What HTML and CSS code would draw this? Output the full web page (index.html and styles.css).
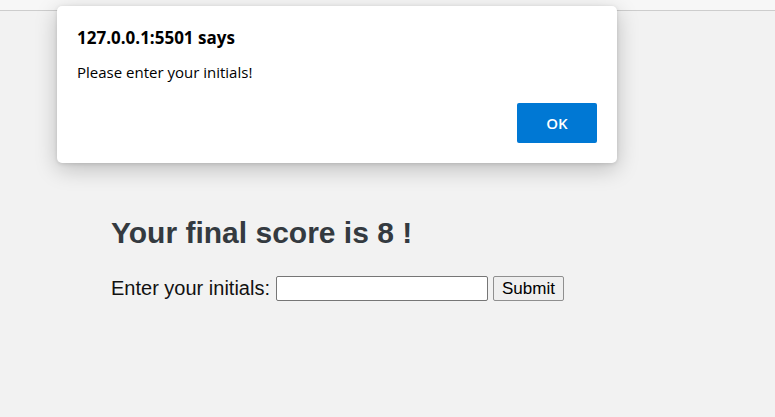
FILE: index.html
```html
<!DOCTYPE html>
<html>
<head>
<meta charset="utf-8">
<title>Quiz</title>
<link rel="stylesheet" href="styles.css">
</head>
<body>
<div class="topbar"></div>
<main class="page">
  <h1 class="score">Your final score is 8 !</h1>
  <form class="form">
    <label class="label" for="initials">Enter your initials:</label>
    <input class="field" id="initials" type="text">
    <button class="submit" type="button">Submit</button>
  </form>
</main>
<div class="dialog">
  <div class="dialog-title">127.0.0.1:5501 says</div>
  <div class="dialog-msg">Please enter your initials!</div>
  <div class="dialog-actions"><button class="ok" type="button">OK</button></div>
</div>
</body>
</html>
```

FILE: styles.css
```css
html, body {
  margin: 0;
  padding: 0;
  height: 100%;
}
body {
  background: #f2f2f2;
  font-family: "Liberation Sans", Arial, sans-serif;
  overflow: hidden;
}
.topbar {
  height: 10px;
  background: #f7f7f7;
  border-bottom: 1px solid #cdcdcd;
}
.page {
  padding: 0 0 0 111px;
}
.score {
  margin: 0;
  padding-top: 205px;
  font-size: 30px;
  font-weight: bold;
  line-height: 34px;
  color: #343a40;
}
.form {
  display: flex;
  align-items: center;
  margin-top: 26px;
  height: 25px;
}
.label {
  font-size: 20px;
  color: #111;
  margin-right: 6px;
}
.field {
  box-sizing: border-box;
  width: 212px;
  height: 25px;
  margin: 0 5px 0 0;
  border: 1px solid #767676;
  border-radius: 2px;
  background: #fff;
  padding: 0 4px;
}
.submit {
  box-sizing: border-box;
  width: 71px;
  height: 25px;
  margin: 0;
  padding: 0;
  font-family: "Liberation Sans", Arial, sans-serif;
  font-size: 17px;
  color: #000;
  background: #efefef;
  border: 1px solid #8f8f8f;
  border-radius: 2px;
}
.dialog {
  position: absolute;
  left: 57px;
  top: 6px;
  width: 560px;
  height: 157px;
  box-sizing: border-box;
  background: #fff;
  border-radius: 5px;
  box-shadow: 0 6px 22px rgba(0,0,0,0.22), 0 1px 4px rgba(0,0,0,0.12);
  padding: 21px 20px 0 20px;
  font-family: "Open Sans", "Noto Sans", sans-serif;
  color: #000;
}
.dialog-title {
  font-size: 17px;
  font-weight: bold;
  line-height: 22px;
}
.dialog-msg {
  font-size: 15px;
  line-height: 20px;
  margin-top: 13px;
}
.dialog-actions {
  display: flex;
  justify-content: flex-end;
  margin-top: 21px;
}
.ok {
  width: 80px;
  height: 40px;
  border: none;
  border-radius: 2px;
  background: #0078d4;
  color: #fff;
  font-family: "Open Sans", "Noto Sans", sans-serif;
  font-size: 15px;
  font-weight: 600;
}
```
